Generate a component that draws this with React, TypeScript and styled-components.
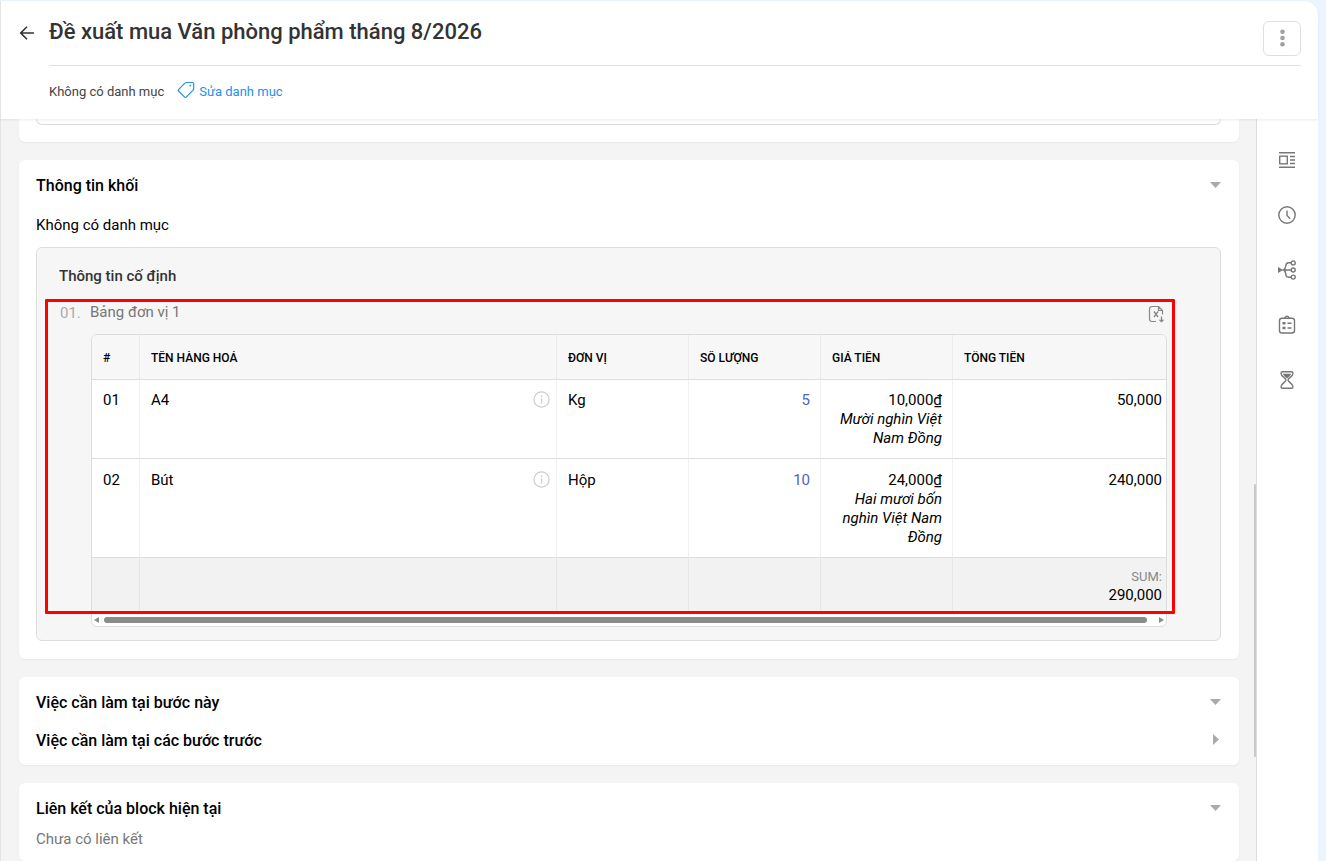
import React from "react";
import styled, { createGlobalStyle } from "styled-components";

const GlobalStyle = createGlobalStyle`
  *, *::before, *::after { box-sizing: border-box; }
  html, body { margin: 0; padding: 0; }
  body {
    background: #ebf4ff;
    color: #000;
    font-family: Roboto, "Noto Sans", sans-serif;
    font-size: 15px;
    line-height: 19px;
  }
  h1, h2, h3, p { margin: 0; }
  button { font: inherit; color: inherit; background: none; border: 0; padding: 0; cursor: pointer; }
`;

const Shell = styled.div`
  display: flex;
  flex-direction: column;
  height: 100vh;
  overflow: hidden;
  padding: 1px 8px 0 0;
`;

const Header = styled.header`
  position: relative;
  flex: none;
  display: grid;
  grid-template-columns: 48px 1fr;
  padding-right: 17px;
  background: #fff;
  border-left: 1px solid #e4e4e4;
  border-top-right-radius: 14px;
  box-shadow: 0 1px 3px rgba(0, 0, 0, 0.08);
`;

const BackButton = styled.button`
  display: flex;
  align-items: center;
  justify-content: center;
  height: 64px;
  padding-left: 4px;
  color: #333;
`;

const TitleRow = styled.div`
  display: flex;
  align-items: center;
  justify-content: space-between;
  height: 65px;
  border-bottom: 1px solid #e2e2e2;
`;

const Title = styled.h1`
  padding-bottom: 2px;
  font-size: 22px;
  line-height: 28px;
  font-weight: 500;
  color: #333;
`;

const MenuButton = styled.button`
  display: flex;
  align-items: center;
  justify-content: center;
  width: 38px;
  height: 35px;
  margin-top: 10px;
  border: 1px solid #dfdfdf;
  border-radius: 6px;
  color: #a0a0a0;
`;

const CategoryRow = styled.div`
  grid-column: 2;
  display: flex;
  align-items: center;
  height: 53px;
  padding-bottom: 3px;
  gap: 13px;
  font-size: 13px;
  color: #444;
`;

const CategoryLink = styled.a`
  display: flex;
  align-items: center;
  gap: 4px;
  color: #2490eb;
  text-decoration: none;
  svg { margin-top: -3px; }
`;

const Body = styled.div`
  flex: 1;
  min-height: 0;
  display: flex;
  background: #f4f4f4;
  border-left: 1px solid #e4e4e4;
`;

const Content = styled.main`
  flex: 1;
  min-width: 0;
  overflow: hidden;
  display: flex;
  flex-direction: column;
  gap: 18px;
  padding: 0 15px 0 18px;
`;

const Card = styled.section<{ $pad: string; $clipped?: boolean }>`
  flex: none;
  display: flex;
  flex-direction: column;
  padding: ${(p) => p.$pad};
  background: #fff;
  border-radius: ${(p) => (p.$clipped ? "0 0 6px 6px" : "6px")};
  box-shadow: 0 1px 2px rgba(0, 0, 0, 0.05);
`;

const PanelEnd = styled.div`
  height: 6px;
  border: 1px solid #ddd;
  border-top: 0;
  border-radius: 0 0 6px 6px;
`;

const CardHead = styled.div`
  display: flex;
  align-items: center;
  justify-content: space-between;
  height: 20px;
  & + & { margin-top: 18px; }
`;

const CardTitle = styled.h2`
  font-size: 16px;
  line-height: 20px;
  font-weight: 500;
`;

const CaretButton = styled.button`
  display: flex;
  align-items: center;
  justify-content: center;
  width: 11px;
  height: 20px;
  padding-bottom: 4px;
  color: #aaa;
`;

const BlockCategory = styled.p`
  padding: 20px 0 12px;
`;

const Empty = styled.p`
  padding-top: 11px;
  color: #777;
`;

const Panel = styled.div`
  border: 1px solid #ddd;
  border-radius: 6px;
  background: #f6f6f6;
  padding-bottom: 13px;
`;

const PanelTitle = styled.h3`
  padding: 19px 22px 13px;
  font-size: 15px;
  line-height: 19px;
  font-weight: 500;
  color: #333;
`;

const Field = styled.div`
  position: relative;
  margin: 0 45px 0 8px;
  padding: 3px 8px 0 14px;
  display: grid;
  grid-template-columns: 32px 1fr;
`;

const Highlight = styled.div`
  position: absolute;
  inset: 0 0 13px;
  border: 3px solid #f00;
  border-radius: 1px;
  pointer-events: none;
`;

const FieldNumber = styled.span`
  padding: 2px 0 0 1px;
  line-height: 19px;
  color: #aaa;
`;

const FieldHead = styled.div`
  display: flex;
  justify-content: space-between;
  height: 32px;
  padding-right: 2px;
  color: #777;
`;

const FieldLabel = styled.span`
  margin-left: -1px;
  line-height: 20px;
`;

const ExportButton = styled.button`
  display: flex;
  align-items: center;
  height: 23px;
  color: #888;
`;

const TableBox = styled.div`
  grid-column: 2;
  border: 1px solid #ddd;
  border-radius: 6px;
  background: #fff;
  overflow: hidden;
`;

const Table = styled.table`
  width: 100%;
  table-layout: fixed;
  border-collapse: separate;
  border-spacing: 0;
`;

const Col = styled.col<{ $w?: number }>`
  width: ${(p) => (p.$w ? `${p.$w}px` : "auto")};
`;

const HeadCell = styled.th`
  height: 45px;
  padding: 2px 11px 0;
  text-align: left;
  font-size: 12px;
  font-weight: 500;
  background: #f7f7f7;
  border-bottom: 1px solid #ddd;
  & + & { border-left: 1px solid #ebebeb; }
  span { display: block; line-height: 14px; overflow: hidden; }
`;

const Cell = styled.td<{ $align?: string; $last?: boolean; $tone?: string }>`
  padding: 11px ${(p) => (p.$last ? 4 : 10)}px 10px 11px;
  vertical-align: top;
  text-align: ${(p) => p.$align ?? "left"};
  color: ${(p) => p.$tone ?? "#000"};
  border-bottom: 1px solid #ddd;
  tr:last-child > & { padding-top: 12px; }
  & + & { border-left: 1px solid #f0f0f0; }
  svg { float: right; margin-right: -4px; color: #ccc; }
`;

const SumCell = styled.td`
  height: 56px;
  padding: 10px 4px 0;
  vertical-align: top;
  text-align: right;
  line-height: 18px;
  background: #f2f2f2;
  & + & { border-left: 1px solid #e6e6e6; }
  small { display: block; font-size: 13px; color: #888; }
`;

const HorizontalScroll = styled.div`
  display: flex;
  align-items: center;
  gap: 5px;
  height: 12px;
  padding: 0 2px;
  color: #8b8b8b;
`;

const HorizontalThumb = styled.div`
  flex: 1;
  height: 6px;
  margin-right: 7px;
  border-radius: 3px;
  background: #8b8b8b;
`;

const VerticalScroll = styled.div`
  width: 2px;
  padding-top: 365px;
`;

const VerticalThumb = styled.div`
  height: 273px;
  border-radius: 1px;
  background: #c9c9c9;
`;

const Rail = styled.nav`
  flex: none;
  display: flex;
  flex-direction: column;
  align-items: center;
  gap: 19px;
  width: 62px;
  padding: 23px 2px 0 0;
  background: #fff;
  border-left: 1px solid #ddd;
`;

const RailButton = styled.button`
  display: flex;
  align-items: center;
  justify-content: center;
  width: 36px;
  height: 36px;
  color: #777;
`;

const Icon = ({ size = 20, children }: { size?: number; children: React.ReactNode }) => (
  <svg width={size} height={size} viewBox={`0 0 ${size} ${size}`} fill="none" stroke="currentColor" strokeWidth="1.4" aria-hidden="true">
    {children}
  </svg>
);

const Caret = ({ open, label }: { open: boolean; label: string }) => (
  <CaretButton aria-label={label} aria-expanded={open}>
    <svg width="11" height="11" viewBox="0 0 11 11" fill="currentColor" aria-hidden="true">
      <path d={open ? "M0 3h11L5.500 9z" : "M3 0l6 5.500L3 11z"} />
    </svg>
  </CaretButton>
);

const InfoIcon = () => (
  <Icon size={17}>
    <circle cx="8.500" cy="8.500" r="7.600" strokeWidth="1.200" />
    <path d="M8.500 7.500v5M8.500 4.500v1.500" strokeWidth="1.400" />
  </Icon>
);

const rows = [
  { no: "01", name: "A4", unit: "Kg", qty: "5", price: "10,000₫", words: "Mười nghìn Việt Nam Đồng", total: "50,000" },
  { no: "02", name: "Bút", unit: "Hộp", qty: "10", price: "24,000₫", words: "Hai mươi bốn nghìn Việt Nam Đồng", total: "240,000" },
];

const headings = ["#", "TÊN HÀNG HOÁ", "ĐƠN VỊ", "SỐ LƯỢNG", "GIÁ TIỀN", "TỔNG TIỀN"];

const railItems = [
  {
    label: "Chi tiết",
    icon: (
      <>
        <path d="M2 2.700h16M2 17.300h16M13 6.500h5M13 10h5M13 13.500h5" />
        <rect x="2.700" y="6.200" width="7.600" height="7.600" />
      </>
    ),
  },
  {
    label: "Lịch sử",
    icon: (
      <>
        <circle cx="10" cy="10" r="8.200" />
        <path d="M10 5.500v5l3.200 3.200" />
      </>
    ),
  },
  {
    label: "Quy trình",
    icon: (
      <>
        <path d="M1 7l5 3-5 3z" fill="currentColor" stroke="none" />
        <path d="M6.500 10H14M14 2.800h-2.500Q9 2.800 8.700 6T6.500 10q2 .8 2.200 4t2.800 3.200H14" />
        <circle cx="16.200" cy="2.900" r="2" />
        <circle cx="16.200" cy="10" r="2" />
        <circle cx="16.200" cy="17.100" r="2" />
      </>
    ),
  },
  {
    label: "Biểu mẫu",
    icon: (
      <>
        <rect x="2.500" y="3.300" width="15" height="14.700" rx="2.500" />
        <path d="M7 3.300Q8.500 3 8.700 1.800q1.300-1.400 2.600 0Q11.500 3 13 3.300M10.500 8.300h4M10.500 13h4" />
        <path d="M5.500 8.300h3M5.500 13h3" strokeWidth="2.400" />
      </>
    ),
  },
  {
    label: "Thời hạn",
    icon: (
      <>
        <path d="M5.500 1.700h9q1.500 0 1.500 1.500c0 3.500-5 4.500-5 6.800s5 3.300 5 6.800q0 1.500-1.500 1.500h-9Q4 18.300 4 16.800C4 13.300 9 12.300 9 10S4 6.700 4 3.200q0-1.500 1.500-1.500z" />
        <path d="M5.800 3.800h8.400Q13.500 6 10 8.500 6.500 6 5.800 3.800z" fill="currentColor" stroke="none" />
      </>
    ),
  },
];

export default function App() {
  return (
    <>
      <GlobalStyle />
      <Shell>
        <Header>
          <BackButton aria-label="Quay lại">
            <Icon size={16}>
              <path d="M15 8H2M8 1.700L1.700 8 8 14.300" strokeWidth="1.600" />
            </Icon>
          </BackButton>
          <TitleRow>
            <Title>Đề xuất mua Văn phòng phẩm tháng 8/2026</Title>
            <MenuButton aria-label="Thêm">
              <svg width="5" height="18" viewBox="0 0 5 18" fill="currentColor" aria-hidden="true">
                <circle cx="2.500" cy="2.700" r="2.300" />
                <circle cx="2.500" cy="9" r="2.300" />
                <circle cx="2.500" cy="15.300" r="2.300" />
              </svg>
            </MenuButton>
          </TitleRow>
          <CategoryRow>
            <span>Không có danh mục</span>
            <CategoryLink href="#">
              <Icon size={18}>
                <path d="M9.300 1.500h6.200q1.200 0 1.200 1.200v5q0 .8-.6 1.400l-6.700 6.700q-1 1-2 0L1.800 10.300q-1-1 0-2L7.900 2.100q.6-.6 1.400-.6z" strokeWidth="1.200" />
                <circle cx="13.300" cy="4.600" r=".9" fill="currentColor" stroke="none" />
              </Icon>
              Sửa danh mục
            </CategoryLink>
          </CategoryRow>
        </Header>
        <Body>
          <Content>
            <Card $clipped $pad="0 18px 17px 17px">
              <PanelEnd />
            </Card>
            <Card $pad="16px 18px 18px 17px">
              <CardHead>
                <CardTitle>Thông tin khối</CardTitle>
                <Caret open label="Thu gọn thông tin khối" />
              </CardHead>
              <BlockCategory>Không có danh mục</BlockCategory>
              <Panel>
                <PanelTitle>Thông tin cố định</PanelTitle>
                <Field>
                  <FieldNumber>01.</FieldNumber>
                  <FieldHead>
                    <FieldLabel>Bảng đơn vị 1</FieldLabel>
                    <ExportButton aria-label="Xuất Excel">
                      <Icon size={18}>
                        <path d="M9 16.500H5Q2.500 16.500 2.500 14V4Q2.500 1.500 5 1.500h6.500L15.500 5.500V9.500M11.500 1.500v4h4" strokeWidth="1.200" />
                        <path d="M7 6.500l4 5.500M11 6.500L7 12" strokeWidth="1.300" />
                        <path d="M14.500 11.500v5M12.500 14.700l2 2 2-2" strokeWidth="1.300" />
                      </Icon>
                    </ExportButton>
                  </FieldHead>
                  <TableBox>
                    <Table>
                      <colgroup>
                        <Col $w={47} />
                        <Col />
                        <Col $w={132} />
                        <Col $w={132} />
                        <Col $w={132} />
                        <Col $w={214} />
                      </colgroup>
                      <thead>
                        <tr>
                          {headings.map((h) => (
                            <HeadCell key={h} scope="col">
                              <span>{h}</span>
                            </HeadCell>
                          ))}
                        </tr>
                      </thead>
                      <tbody>
                        {rows.map((r) => (
                          <tr key={r.no}>
                            <Cell>{r.no}</Cell>
                            <Cell>
                              <InfoIcon />
                              {r.name}
                            </Cell>
                            <Cell>{r.unit}</Cell>
                            <Cell $align="right" $tone="#4f63c4">{r.qty}</Cell>
                            <Cell $align="right">
                              {r.price}
                              <br />
                              <em>{r.words}</em>
                            </Cell>
                            <Cell $align="right" $last>{r.total}</Cell>
                          </tr>
                        ))}
                      </tbody>
                      <tfoot>
                        <tr>
                          <SumCell />
                          <SumCell />
                          <SumCell />
                          <SumCell />
                          <SumCell />
                          <SumCell>
                            <small>SUM:</small>
                            290,000
                          </SumCell>
                        </tr>
                      </tfoot>
                    </Table>
                    <HorizontalScroll>
                      <svg width="5" height="6" viewBox="0 0 5 6" fill="currentColor" aria-hidden="true"><path d="M5 0v6L0 3z" /></svg>
                      <HorizontalThumb />
                      <svg width="5" height="6" viewBox="0 0 5 6" fill="currentColor" aria-hidden="true"><path d="M0 0v6l5-3z" /></svg>
                    </HorizontalScroll>
                  </TableBox>
                  <Highlight />
                </Field>
              </Panel>
            </Card>
            <Card $pad="16px 18px 14px 17px">
              <CardHead>
                <CardTitle>Việc cần làm tại bước này</CardTitle>
                <Caret open label="Thu gọn việc cần làm tại bước này" />
              </CardHead>
              <CardHead>
                <CardTitle>Việc cần làm tại các bước trước</CardTitle>
                <Caret open={false} label="Mở rộng việc cần làm tại các bước trước" />
              </CardHead>
            </Card>
            <Card $pad="16px 18px 12px 17px">
              <CardHead>
                <CardTitle>Liên kết của block hiện tại</CardTitle>
                <Caret open label="Thu gọn liên kết" />
              </CardHead>
              <Empty>Chưa có liên kết</Empty>
            </Card>
          </Content>
          <VerticalScroll>
            <VerticalThumb />
          </VerticalScroll>
          <Rail>
            {railItems.map((item) => (
              <RailButton key={item.label} aria-label={item.label}>
                <Icon>{item.icon}</Icon>
              </RailButton>
            ))}
          </Rail>
        </Body>
      </Shell>
    </>
  );
}
